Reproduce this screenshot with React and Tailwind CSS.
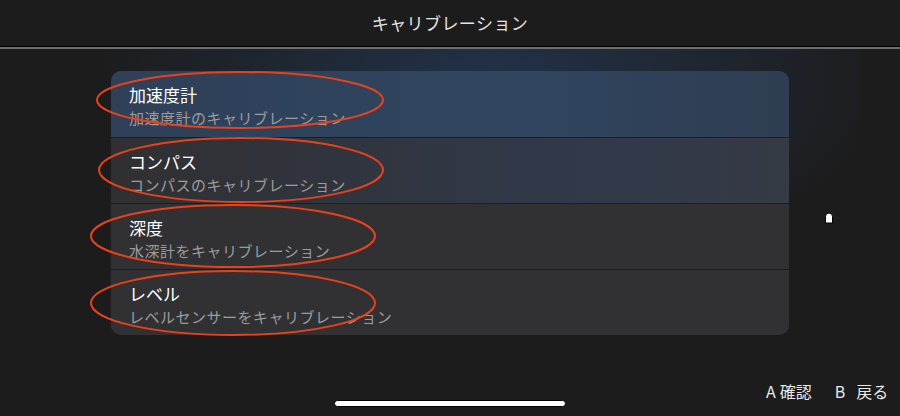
import React from 'react';

const FONT = { fontFamily: '"Noto Sans CJK JP", "Noto Sans", sans-serif' };

const items = [
  { title: '加速度計', desc: '加速度計のキャリブレーション' },
  { title: 'コンパス', desc: 'コンパスのキャリブレーション' },
  { title: '深度', desc: '水深計をキャリブレーション' },
  { title: 'レベル', desc: 'レベルセンサーをキャリブレーション' },
];

// 赤い注釈の楕円
const marks = [
  { cx: 240, cy: 100, rx: 143, ry: 28 },
  { cx: 241, cy: 170, rx: 142, ry: 32 },
  { cx: 233, cy: 236, rx: 142, ry: 31 },
  { cx: 233, cy: 303, rx: 142, ry: 32 },
];

export default function App() {
  return (
    <div
      className="relative w-[900px] h-[416px] overflow-hidden bg-[#1c1c1d] text-white"
      style={FONT}
    >
      {/* ヘッダー */}
      <div className="h-[46px] flex items-center justify-center">
        <span className="text-[17px] text-[#e4e4e4] tracking-wide">キャリブレーション</span>
      </div>
      <div className="h-px bg-black" />
      <div className="h-[2px] bg-[#6e6e70]" />

      {/* 背景の青いグロー */}
      <div className="relative">
        <div className="absolute left-[40px] top-0 w-[820px] h-[240px] bg-[radial-gradient(ellipse_at_55%_15%,rgba(38,66,104,0.6),rgba(28,28,29,0)_62%)]" />

        <div className="relative px-[111px] pt-[22px]">
          <div className="rounded-[10px] overflow-hidden bg-[#303032] w-[678px]">
            {items.map((item, i) => (
              <div
                key={item.title}
                className={
                  'h-[66px] pl-[18px] pt-[13px] ' +
                  (i === 0
                    ? 'bg-[linear-gradient(90deg,#2f4058,#30455f_60%,#2f3d52)] '
                    : i === 1
                    ? 'bg-[linear-gradient(90deg,#303032,#31394a_70%,#353a44)] '
                    : 'bg-[#313133] ') +
                  (i > 0 ? 'border-t border-[#1e1e20]' : '')
                }
              >
                <div className="text-[17px] leading-[22px] text-white">{item.title}</div>
                <div className="text-[15px] leading-[20px] text-[#9c9c9e] mt-[2px] tracking-[0.5px]">
                  {item.desc}
                </div>
              </div>
            ))}
          </div>
        </div>
      </div>

      {/* 注釈 */}
      <svg className="absolute left-0 top-0 pointer-events-none" width="900" height="416">
        {marks.map((m, i) => (
          <ellipse
            key={i}
            cx={m.cx}
            cy={m.cy}
            rx={m.rx}
            ry={m.ry}
            fill="none"
            stroke="#e8421d"
            strokeWidth="2"
          />
        ))}
      </svg>

      {/* 小さなカーソル */}
      <svg className="absolute left-[824px] top-[212px]" width="10" height="12" viewBox="0 0 10 12">
        <path
          d="M1.5 11 V4.5 Q1.5 1 5 1 Q8.5 1 8.5 4.5 V11 Z"
          fill="#fff"
          stroke="#000"
          strokeWidth="1"
        />
      </svg>

      {/* フッター */}
      <div className="absolute left-[766px] top-[380px] flex items-center text-[16px] leading-[22px] text-[#e8e8e8]">
        <span>A</span>
        <span className="ml-[4px]">確認</span>
        <span className="ml-[23px]">B</span>
        <span className="ml-[11px]">戻る</span>
      </div>
      <div className="absolute left-[334px] top-[400px] w-[232px] h-[7px] rounded-full bg-white border border-black" />
    </div>
  );
}
